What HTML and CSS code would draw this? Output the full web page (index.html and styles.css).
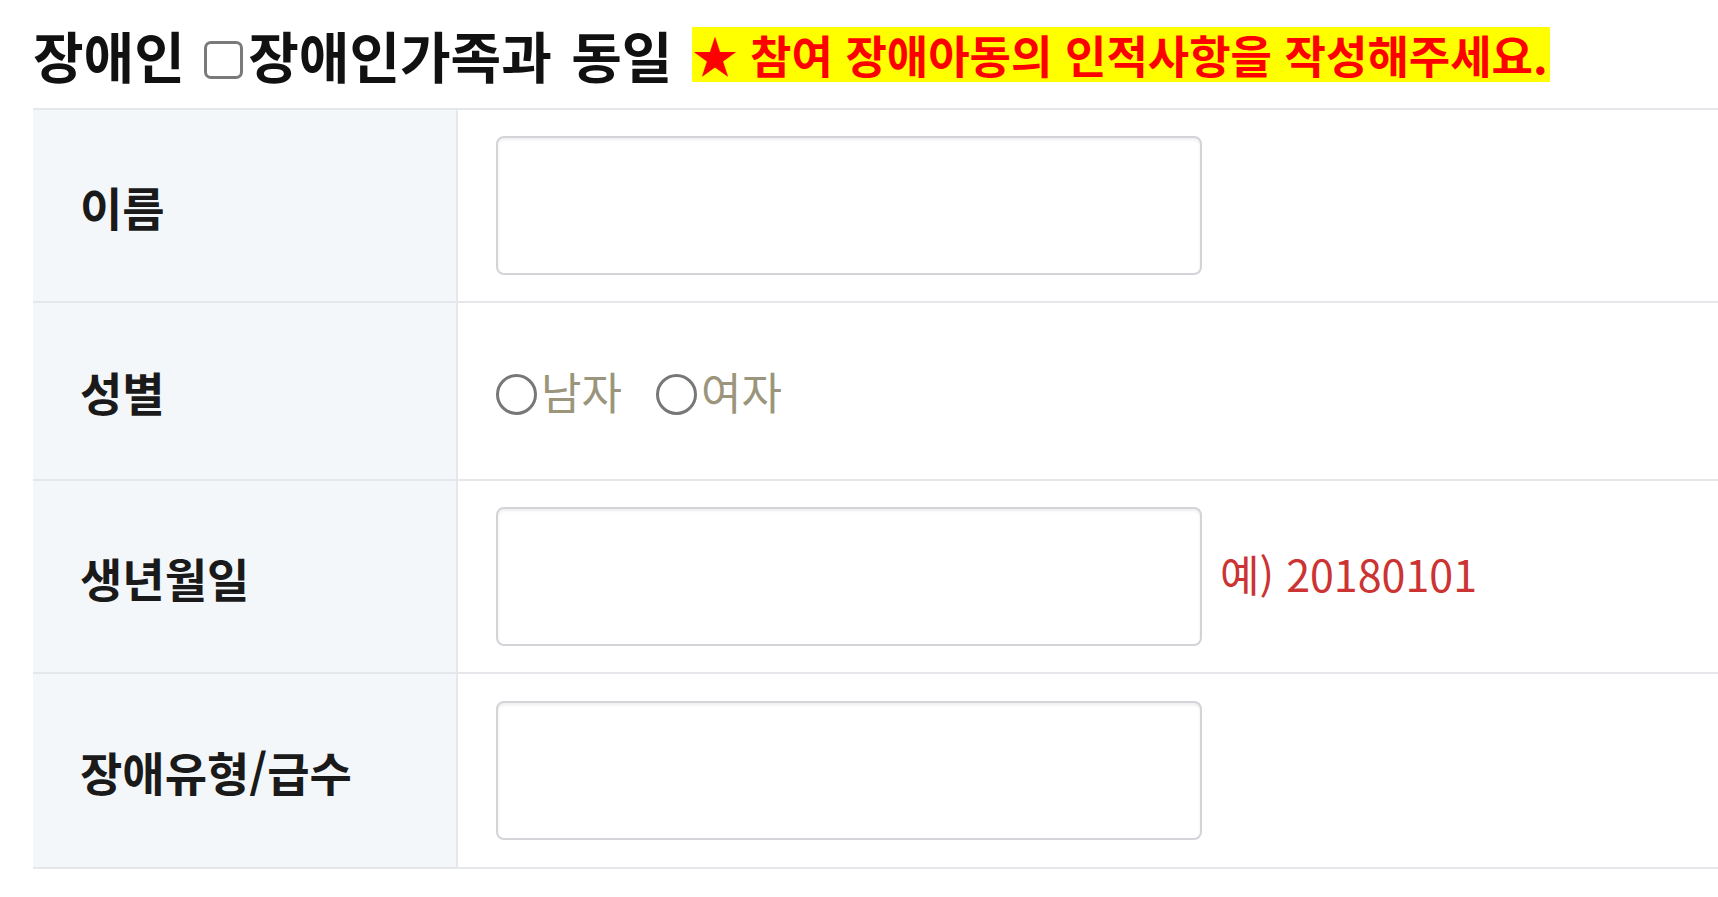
FILE: index.html
```html
<!DOCTYPE html>
<html lang="ko">
<head>
  <meta charset="UTF-8">
  <title>장애인 인적사항</title>
  <link rel="stylesheet" href="styles.css">
</head>
<body>
  <div class="title-bar">
    <span class="title">장애인 <input type="checkbox" class="same-check">장애인가족과 동일</span>
    <span class="notice">★ 참여 장애아동의 인적사항을 작성해주세요.</span>
  </div>

  <div class="form-table">
    <div class="row row-tall">
      <div class="label">이름</div>
      <div class="field"><input type="text" class="box"></div>
    </div>
    <div class="row row-short">
      <div class="label">성별</div>
      <div class="field">
        <label class="radio"><input type="radio" name="sex">남자</label>
        <label class="radio"><input type="radio" name="sex">여자</label>
      </div>
    </div>
    <div class="row row-tall">
      <div class="label">생년월일</div>
      <div class="field"><input type="text" class="box"><span class="hint">예) 20180101</span></div>
    </div>
    <div class="row row-tall last">
      <div class="label">장애유형/급수</div>
      <div class="field"><input type="text" class="box"></div>
    </div>
  </div>
</body>
</html>
```

FILE: styles.css
```css
body {
  margin: 0;
  padding: 27px 0 0 33px;
  font-family: "Noto Sans CJK KR", "Noto Sans", sans-serif;
  background: #fff;
  color: #111;
}
.title-bar {
  display: flex;
  align-items: center;
  height: 55px;
  white-space: nowrap;
}
.title {
  font-size: 55px;
  font-weight: 700;
  line-height: 55px;
  word-spacing: 4px;
}
.same-check {
  -webkit-appearance: none;
  appearance: none;
  width: 39px;
  height: 38px;
  margin: 0 5px 0 0;
  border: 3px solid #7a7a7a;
  border-radius: 7px;
  box-sizing: border-box;
  vertical-align: -1px;
  background: #fff;
}
.notice {
  margin-left: 20px;
  background: #ffff00;
  color: #ff0000;
  font-size: 45px;
  font-weight: 700;
  line-height: 55px;
  height: 55px;
  word-spacing: 0;
  padding-right: 2px;
}
.form-table {
  margin-top: 26px;
}
.row {
  display: grid;
  grid-template-columns: 425px 1fr;
  border-top: 2px solid #e5e7ea;
  box-sizing: border-box;
}
.row-tall {
  height: 193px;
}
.row-short {
  height: 178px;
}
.row.last {
  height: 197px;
  border-bottom: 2px solid #e5e7ea;
}
.label {
  display: flex;
  align-items: center;
  padding-left: 47px;
  background: #f4f7f9;
  border-right: 2px solid #e5e7ea;
  font-size: 46px;
  font-weight: 700;
  color: #1a1a1a;
}
.field {
  display: flex;
  align-items: center;
  padding-left: 38px;
}
.box {
  width: 706px;
  height: 139px;
  box-sizing: border-box;
  border: 2px solid #d2d4d8;
  border-radius: 8px;
  box-shadow: inset 0 2px 3px rgba(0, 0, 0, 0.07);
  background: #fff;
  margin: 0;
}
.hint {
  margin-left: 18px;
  margin-bottom: 8px;
  font-size: 43px;
  color: #cc3333;
}
.radio {
  display: flex;
  align-items: center;
  margin-right: 34px;
  font-size: 44px;
  color: #9b957c;
}
.radio input {
  -webkit-appearance: none;
  appearance: none;
  width: 41px;
  height: 41px;
  margin: 6px 4px 0 0;
  border: 3px solid #777;
  border-radius: 50%;
  box-sizing: border-box;
  background: #fff;
}
```
